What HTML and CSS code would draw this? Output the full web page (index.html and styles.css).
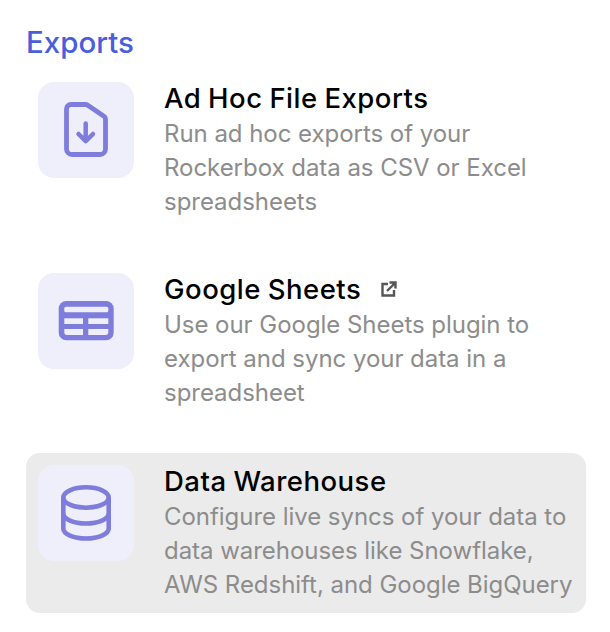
FILE: index.html
```html
<!DOCTYPE html>
<html lang="en">
<head>
<meta charset="utf-8">
<title>Exports</title>
<link rel="stylesheet" href="styles.css">
</head>
<body>
<main class="panel">
  <h2 class="heading">Exports</h2>
  <ul class="list">
    <li class="item">
      <div class="tile">
        <svg class="icon" viewBox="0 0 48 48" fill="none" stroke="#7e7ddb" stroke-width="4.800" stroke-linecap="round" stroke-linejoin="round">
          <path d="M9 -1.500H23.500a4 4 0 0 1 3 1.300L42.300 10.500a4 4 0 0 1 1.200 3V43a5.500 5.500 0 0 1-5.500 5.500H10A5.500 5.500 0 0 1 4.500 43V3a4.500 4.500 0 0 1 4.500-4.500z"/>
          <path d="M23.700 17.500V35M16.500 28l7.200 7.200L31 28" stroke-width="4.500"/>
        </svg>
      </div>
      <div class="copy">
        <h3 class="title">Ad Hoc File Exports</h3>
        <p class="desc">Run ad hoc exports of your<br>Rockerbox data as CSV or Excel<br>spreadsheets</p>
      </div>
    </li>
    <li class="item">
      <div class="tile">
        <svg class="icon" viewBox="0 0 48 48" fill="none">
          <rect x="-3.300" y="4" width="55" height="39.300" rx="7.500" fill="#7e7ddb"/>
          <rect x="2.300" y="9.700" width="44" height="5.600" rx="1.500" fill="#efeefb"/>
          <rect x="2.300" y="21.300" width="18.700" height="5.700" fill="#efeefb"/>
          <rect x="26.300" y="21.300" width="20" height="5.700" fill="#efeefb"/>
          <path d="M2.300 32H21v6H5a2.700 2.700 0 0 1-2.700-2.700zM26.300 32h20v3.300A2.700 2.700 0 0 1 43.600 38H26.300z" fill="#efeefb"/>
        </svg>
      </div>
      <div class="copy">
        <h3 class="title">Google Sheets
          <svg class="ext" viewBox="0 0 16 16" fill="none" stroke="#555" stroke-width="2.400">
            <path d="M7 3H1.500v11.500H13V9"/>
            <path d="M6 10L14 2M8.500 1.500H14.500V7.500"/>
          </svg>
        </h3>
        <p class="desc">Use our Google Sheets plugin to<br>export and sync your data in a<br>spreadsheet</p>
      </div>
    </li>
    <li class="item item-active">
      <div class="tile">
        <svg class="icon" viewBox="0 0 48 48" fill="none" stroke="#7e7ddb" stroke-width="4.600">
          <ellipse cx="24" cy="8.500" rx="22.700" ry="10.200"/>
          <path d="M1.300 8.500v31c0 5.500 10.200 10 22.700 10s22.700-4.500 22.700-10v-31"/>
          <path d="M1.300 24.500c0 5.500 10.200 10 22.700 10s22.700-4.500 22.700-10"/>
        </svg>
      </div>
      <div class="copy">
        <h3 class="title">Data Warehouse</h3>
        <p class="desc">Configure live syncs of your data to<br>data warehouses like Snowflake,<br>AWS Redshift, and Google BigQuery</p>
      </div>
    </li>
  </ul>
</main>
</body>
</html>
```

FILE: styles.css
```css
* { box-sizing: border-box; }

html, body {
  margin: 0;
  padding: 0;
  background: #fff;
}

.panel {
  padding: 24px 24px 0 26px;
  font-family: Inter, "Liberation Sans", sans-serif;
}

.heading {
  margin: 0;
  height: 45.600px;
  font-family: Inter, sans-serif;
  font-size: 29.500px;
  line-height: 36px;
  font-weight: 500;
  color: #4a5ddb;
}

.list {
  list-style: none;
  margin: 0;
  padding: 0;
  display: flex;
  flex-direction: column;
  gap: 31.500px;
}

.item {
  height: 160px;
  padding: 12px;
  display: flex;
  gap: 30px;
  border-radius: 14px;
}

.item-active {
  background: #ebebeb;
}

.tile {
  flex: none;
  width: 96px;
  height: 96px;
  border-radius: 16px;
  background: #efeefb;
  display: flex;
  align-items: center;
  justify-content: center;
}

.icon {
  width: 48px;
  height: 48px;
  overflow: visible;
}

.copy {
  min-width: 0;
}

.title {
  margin: 0;
  font-family: Inter, sans-serif;
  font-size: 27.500px;
  line-height: 32px;
  font-weight: 550;
  letter-spacing: 0.500px;
  word-spacing: -1px;
  color: #000;
  display: flex;
  align-items: center;
  gap: 20px;
}

.ext {
  width: 16px;
  height: 16px;
}

.desc {
  margin: 3px 0 0;
  font-size: 24px;
  line-height: 34px;
  font-weight: 400;
  letter-spacing: -0.040px;
  color: #8c8c8c;
  white-space: nowrap;
}
```
